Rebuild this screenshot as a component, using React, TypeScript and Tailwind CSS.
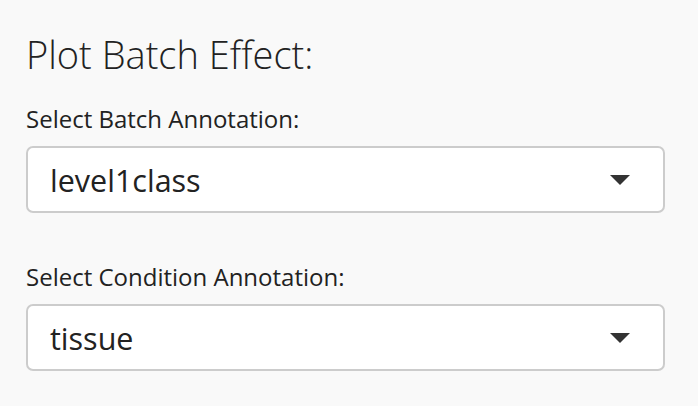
import React from 'react'

const font = { fontFamily: '"Open Sans", "Noto Sans", sans-serif' }

function Caret() {
  return (
    <svg width="20" height="10" viewBox="0 0 20 10" className="shrink-0">
      <path d="M0 0 L20 0 L10 10 Z" fill="#333333" />
    </svg>
  )
}

function SelectBox({ value }: { value: string }) {
  return (
    <div className="flex h-[67px] items-center justify-between rounded-[7px] border-2 border-[#cccccc] bg-white pl-[22px] pr-[33px]">
      <span className="text-[30.5px] leading-[40px] text-[#222222]">{value}</span>
      <Caret />
    </div>
  )
}

export default function App() {
  return (
    <div className="h-[406px] w-[698px] bg-[#f9f9f9] pl-[26px] pr-[33px] pt-[32px]" style={font}>
      <h3 className="text-[38px] font-light leading-[44px] text-[#222222]">Plot Batch Effect:</h3>
      <label className="mt-[27px] block text-[24px] font-medium leading-[32px] text-[#222222]">
        Select Batch Annotation:
      </label>
      <div className="mt-[11px]">
        <SelectBox value="level1class" />
      </div>
      <label className="mt-[48px] block text-[24px] font-medium leading-[32px] text-[#222222]">
        Select Condition Annotation:
      </label>
      <div className="mt-[11px]">
        <SelectBox value="tissue" />
      </div>
    </div>
  )
}
